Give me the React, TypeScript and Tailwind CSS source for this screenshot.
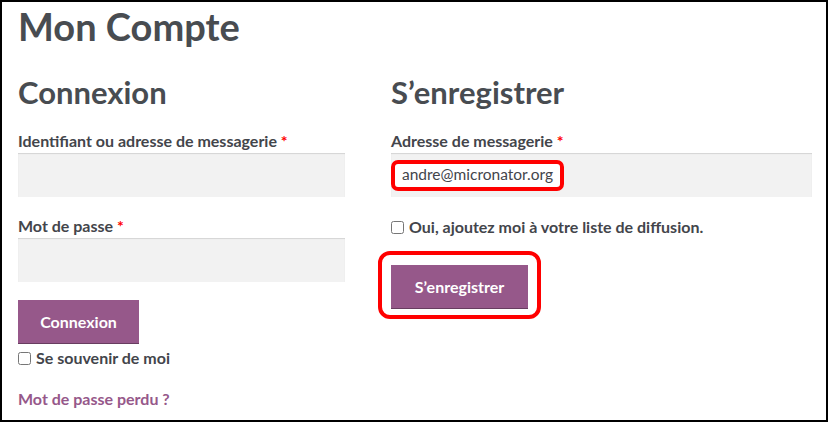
import React from 'react';

const font = { fontFamily: 'Lato, "Open Sans", sans-serif' };

const Required = () => <span className="text-[#ff0000]"> *</span>;

const Field = ({ label, children }: { label: string; children?: React.ReactNode }) => (
  <div>
    <label className="block h-[20px] leading-[20px] text-[16px] font-bold text-[#43454b]">
      {label}
      <Required />
    </label>
    <div className="mt-[2px] h-[44px] bg-[#f2f2f2] shadow-[inset_0_1px_1px_rgba(0,0,0,0.125)] flex items-center">
      {children}
    </div>
  </div>
);

const Checkbox = ({ label }: { label: string }) => (
  <label className="flex items-center gap-[5px] h-[20px] text-[16px] font-bold text-[#43454b]">
    <input type="checkbox" className="w-[13px] h-[13px] m-0" />
    <span className="leading-[20px]">{label}</span>
  </label>
);

const Button = ({ children, className = '' }: { children: React.ReactNode; className?: string }) => (
  <button
    className={`h-[44px] bg-[#96588a] text-white text-[16px] font-bold shadow-[inset_0_-1px_0_rgba(0,0,0,0.3)] ${className}`}
  >
    {children}
  </button>
);

export default function App() {
  return (
    <div className="w-[828px] h-[422px] bg-white border-2 border-black overflow-hidden" style={font}>
      <div className="pl-[16px] pr-[14px]">
        <h1 className="h-[48px] leading-[48px] text-[38px] font-bold text-[#484c51]">Mon Compte</h1>

        <div className="flex justify-between">
          {/* Connexion */}
          <div className="w-[327px]">
            <h2 className="mt-[22px] h-[40px] leading-[40px] text-[31px] font-bold text-[#484c51]">Connexion</h2>
            <div className="mt-[19px]">
              <Field label="Identifiant ou adresse de messagerie" />
            </div>
            <div className="mt-[19px]">
              <Field label="Mot de passe" />
            </div>
            <div className="mt-[18px]">
              <Button className="w-[121px]">Connexion</Button>
            </div>
            <div className="mt-[4px]">
              <Checkbox label="Se souvenir de moi" />
            </div>
            <a className="block mt-[21px] h-[20px] leading-[20px] text-[16px] font-bold text-[#96588a]" href="#">
              Mot de passe perdu ?
            </a>
          </div>

          {/* S'enregistrer */}
          <div className="w-[421px]">
            <h2 className="mt-[22px] h-[40px] leading-[40px] text-[31px] font-bold text-[#484c51]">S’enregistrer</h2>
            <div className="mt-[19px]">
              <Field label="Adresse de messagerie">
                <span className="h-[31px] px-[7px] flex items-center bg-white border-4 border-[#ff0000] rounded-[7px] text-[15.5px] text-[#43454b]">
                  andre@micronator.org
                </span>
              </Field>
            </div>
            <div className="mt-[20px]">
              <Checkbox label="Oui, ajoutez moi à votre liste de diffusion." />
            </div>
            <div className="mt-[28px] relative w-fit">
              <Button className="w-[137px]">S’enregistrer</Button>
              <span className="absolute -left-[13px] -top-[14px] -right-[13px] -bottom-[10px] border-4 border-[#ff0000] rounded-[12px] pointer-events-none" />
            </div>
          </div>
        </div>
      </div>
    </div>
  );
}
